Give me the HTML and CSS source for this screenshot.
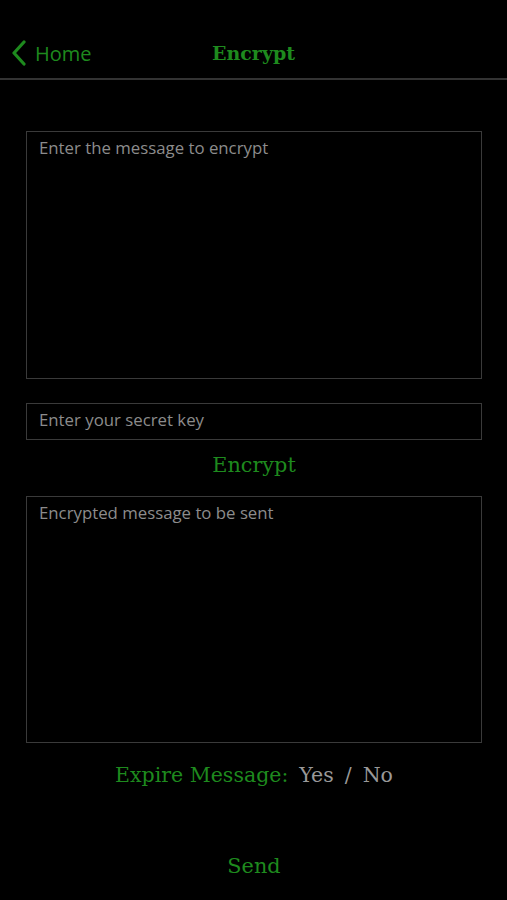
FILE: index.html
```html
<!DOCTYPE html>
<html lang="en">
<head>
    <meta charset="UTF-8">
    <meta name="viewport" content="width=device-width, initial-scale=1.0">
    <title>Encrypt</title>
    <link rel="stylesheet" href="styles.css">
</head>
<body>
    <div id="wrap">
        <div class="header">
            <a href="#" class="back">
                <svg width="16" height="26" viewBox="0 0 16 26"><path d="M13 2 L3 13 L13 24" fill="none" stroke="#1e8a1e" stroke-width="3.2" stroke-linecap="round" stroke-linejoin="round"/></svg>
                <span>Home</span>
            </a>
            <h1 class="title">Encrypt</h1>
        </div>
        <div class="content">
            <textarea class="box msg" placeholder="Enter the message to encrypt"></textarea>
            <input type="text" class="box key" placeholder="Enter your secret key">
            <div class="action"><a href="#" class="btn">Encrypt</a></div>
            <textarea class="box result" placeholder="Encrypted message to be sent"></textarea>
            <div class="expire">
                <span class="label">Expire Message:</span>
                <span class="opt">Yes</span>
                <span class="sep">/</span>
                <span class="opt">No</span>
            </div>
            <div class="send"><a href="#" class="btn">Send</a></div>
        </div>
    </div>
</body>
</html>
```

FILE: styles.css
```css
* { margin:0; padding:0; box-sizing: border-box;}
body {
    background: #000;
    font-family: "Open Sans", "Liberation Sans", sans-serif;
}
#wrap {
    width: 507px;
    height: 900px;
    background: #000;
}
.header {
    position: relative;
    height: 80px;
    padding-top: 28px;
    border-bottom: 2px solid #333;
}
.back {
    position: absolute;
    left: 11px;
    top: 28px;
    height: 50px;
    display: flex;
    align-items: center;
    gap: 8px;
    color: #1e8a1e;
    text-decoration: none;
    font-size: 20px;
}
.title {
    height: 50px;
    line-height: 50px;
    text-align: center;
    color: #1e8a1e;
    font-family: "DejaVu Serif", serif;
    font-size: 19px;
    font-weight: 600;
}
.content {
    display: flex;
    flex-direction: column;
    padding: 0 25px 0 26px;
}
.box {
    display: block;
    width: 100%;
    background: #000;
    border: 1px solid #3a3a3a;
    color: #ccc;
    font-family: "Open Sans", "Liberation Sans", sans-serif;
    font-size: 16.8px;
    padding: 4px 12px;
    resize: none;
    outline: none;
}
.box::placeholder { color: #8c8c8c; }
.msg {
    margin-top: 51px;
    height: 248px;
}
.key {
    margin-top: 24px;
    height: 37px;
    padding: 0 12px 4px;
}
.result { height: 247px; }
.action {
    height: 56px;
    line-height: 50px;
    text-align: center;
}
.btn {
    color: #1e8a1e;
    text-decoration: none;
    font-family: "DejaVu Serif", serif;
    font-size: 20.8px;
}
.expire {
    height: 64px;
    display: flex;
    align-items: center;
    justify-content: center;
    gap: 11px;
    font-family: "DejaVu Serif", serif;
    font-size: 20.5px;
}
.label { color: #1e8a1e; }
.opt, .sep { color: #999; }
.send {
    height: 118px;
    line-height: 118px;
    text-align: center;
}
```
